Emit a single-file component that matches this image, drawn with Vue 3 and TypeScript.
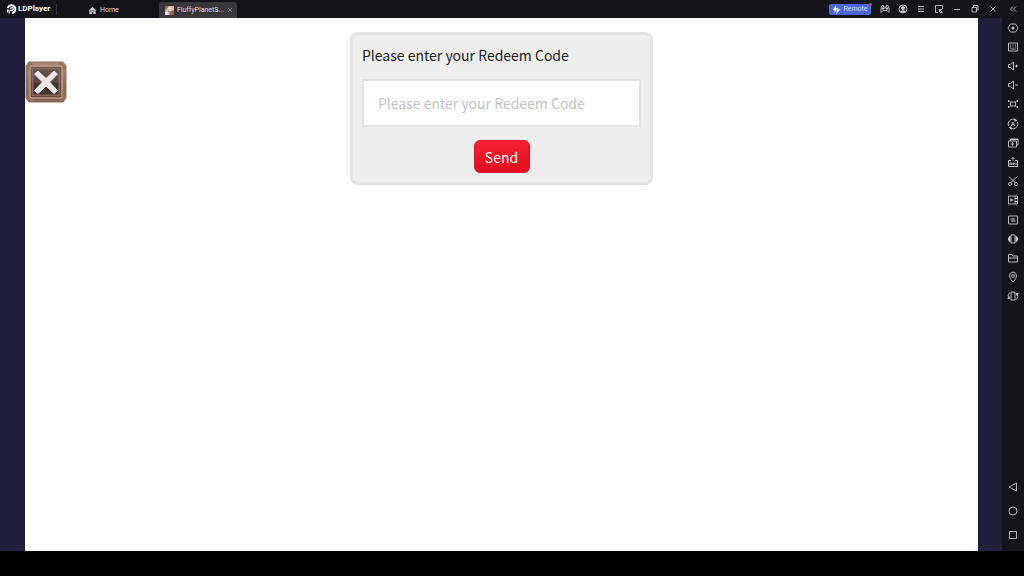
<script setup lang="ts">
import { ref } from 'vue'

interface Icon {
  label: string
  line: string
  solid?: string
}

const code = ref('')

const windowActions: Icon[] = [
  { label: 'Gamepad', line: 'M2 9.500V5L3 2.500h1.500v1.500h3V2.500H9L10 5v4.500L8 7.500H4z M2.500 5h7', solid: 'M3 5h2v1.500H3z M7 5h2v1.500H7z' },
  { label: 'Account', line: 'M6 2a4 4 0 1 0 0 8a4 4 0 1 0 0-8z', solid: 'M6 3a2 2 0 1 0 0 4a2 2 0 1 0 0-4z M3 8.500Q6 6 9 8.500Q6 11 3 8.500z' },
  { label: 'Menu', line: 'M3 3.500h6 M3 6h6 M3 8.500h6' },
  { label: 'Small window', line: 'M5 9.500H2.500v-7h7V6 M6.500 6.500l3 3 M6.500 9V6.500H9 M7 9.500h2.500' },
  { label: 'Minimize', line: 'M3 6.500h6' },
  { label: 'Restore', line: 'M3 4.500h4.500V9H3z M4.500 4V2.500H9V7H8' },
  { label: 'Close', line: 'M3.500 3.500l5 5 M8.500 3.500l-5 5' },
]

const tools: Icon[] = [
  { label: 'Settings', line: 'M3.500 2h5L11 6l-2.500 4h-5L1 6z', solid: 'M6 4.500a1.500 1.500 0 1 0 0 3a1.500 1.500 0 1 0 0-3z' },
  { label: 'Keyboard mapping', line: 'M1.500 2h9v8h-9z M3 4h1 M5.500 4h1 M8 4h1 M3 6h1 M5.500 6h1 M8 6h1 M3.500 8h5' },
  { label: 'Volume up', line: 'M1.500 4.500h2L6.500 2v8L3.500 7.500h-2z M8 6h3 M9.500 4.500v3' },
  { label: 'Volume down', line: 'M1.500 4.500h2L6.500 2v8L3.500 7.500h-2z M8 6h3' },
  { label: 'Full screen', line: 'M3.500 4h5v4h-5z M1.500 2l2 2 M10.500 2l-2 2 M1.500 10l2-2 M10.500 10l-2-2 M1.500 4V2 M10.500 2v2 M1.500 8v2 M10.500 10V8' },
  { label: 'Auto rotate', line: 'M1.500 8A5 5 0 0 1 8 1.500 M10.500 4A5 5 0 0 1 4 10.500 M4.200 8L6 3.800L7.800 8 M5 6.800h2', solid: 'M7.500 0l3 3L7.500 3.500z M4.500 12L1.500 9L4.500 8.500z' },
  { label: 'Multi instance', line: 'M3.500 4V2H11v6H9.500 M1.500 4h8v6h-8z M5.500 5.200v3.600 M3.700 7h3.600 M3.500 2.500H11' },
  { label: 'Install APK', line: 'M4 4.500H1.500v6h9v-6H8 M6 5V1.500 M4.500 3L6 1.500L7.500 3 M3 9V7h1.500v2 M6 9V7h1.500v1H6 M9 6.500V9' },
  { label: 'Screenshot', line: 'M2 1.500l6.500 6.500 M10 1.500L3.500 8 M3 7.500a1.500 1.500 0 1 0 0 3a1.500 1.500 0 1 0 0-3z M9 7.500a1.500 1.500 0 1 0 0 3a1.500 1.500 0 1 0 0-3z' },
  { label: 'Record video', line: 'M1.500 2h9v8h-9z M8 2v8 M8 4.500h2.500 M8 7.500h2.500', solid: 'M3.500 4l3 2l-3 2z' },
  { label: 'Synchronizer', line: 'M1.500 2h9v8h-9z', solid: 'M3.500 4.500h3V3.700L8.500 5.500h-5z M8.500 7.500h-3v.8L3.500 6.500h5z' },
  { label: 'Shake', line: 'M4 2h4v8H4z', solid: 'M3.500 2.500v7L2.500 9L1 7V5l1.500-2z M8.500 2.500v7l1-.5L11 7V5L9.500 3z' },
  { label: 'Shared folder', line: 'M1.500 10V2.500h3.500l1 1.500h4.500v6z M1.500 6h9' },
  { label: 'Location', line: 'M6 1A4 4 0 0 0 2.500 5C2.500 7.500 6 11 6 11S9.500 7.500 9.500 5A4 4 0 0 0 6 1z M6 3.500a1.500 1.500 0 1 0 0 3a1.500 1.500 0 1 0 0-3z' },
  { label: 'Rotate', line: 'M4 2h4v8H4z M2.500 2.500Q0 5.500 2 9 M9.500 9.500Q12 6.500 10 3 M.5 8.500H2.500v-2 M11.500 3.500h-2v2' },
]

const navigation: Icon[] = [
  { label: 'Back', line: 'M9.500 2v8L2 6z' },
  { label: 'Home screen', line: 'M6 2a4 4 0 1 0 0 8a4 4 0 1 0 0-8z' },
  { label: 'Recent apps', line: 'M2.500 2.500h7v7h-7z' },
]
</script>

<template>
  <div class="emulator">
    <header class="titlebar">
      <div class="brand">
        <svg class="logo" viewBox="0 0 12 12" aria-hidden="true">
          <path d="M2 4.500A4.200 4.200 0 1 1 6.500 9.800" fill="none" stroke="#fff" stroke-width="2" />
          <path d="M5 5.500a1.500 1.500 0 1 1 1.500 1.500H4.500L3 10.500" fill="none" stroke="#fff" stroke-width="1.300" />
          <path d="M1 6h2.500L1.500 10z" fill="#fff" />
        </svg>
        <span>LDPlayer</span>
      </div>
      <nav class="tabs">
        <a class="home" href="#home">
          <svg class="icon-small" viewBox="0 0 10 10" aria-hidden="true">
            <path d="M5 1L9.500 5H8.500v4H6V7H4v2H1.500V5H.5z" fill="#ccc" />
            <path d="M2 5.500h6" fill="none" stroke="#55545a" />
          </svg>
          <span>Home</span>
        </a>
        <div class="tab">
          <svg class="icon-small" viewBox="0 0 10 10" aria-hidden="true">
            <path d="M0 0h10v10H0z" fill="#d8b5a4" />
            <path d="M0 0h4L2 4H0z M6 5h4v5H5z" fill="#9a6358" />
            <path d="M3 2l4-1l2 3l-3 2l-3-1z M0 7l4-1v4H0z" fill="#f2e7da" />
            <path d="M4 4h1v1H4z M7 3h1v1H7z M3 6h3v1H3z" fill="#704c4c" />
          </svg>
          <span>FluffyPlanetS...</span>
          <button class="tab-close" type="button" aria-label="Close tab">
            <svg viewBox="0 0 6 6"><path d="M1 1l4 4M5 1L1 5" fill="none" stroke="#888" /></svg>
          </button>
        </div>
      </nav>
      <button class="remote" type="button">
        <svg class="icon-small" viewBox="0 0 10 10" aria-hidden="true">
          <path d="M4.500 0.500L1 5.500h2.500L3 8l3-4H4z M6.500 3L6 5h3L5 9.500L5.500 6.500z" fill="#fff" stroke="#fff" stroke-width=".4" />
        </svg>
        <span>Remote</span>
        <i class="dot"></i>
      </button>
      <div class="window-actions">
        <button v-for="icon in windowActions" :key="icon.label" type="button" :aria-label="icon.label">
          <svg class="icon" viewBox="0 0 12 12">
            <path class="line" :d="icon.line" />
            <path v-if="icon.solid" class="solid" :d="icon.solid" />
          </svg>
        </button>
      </div>
      <button class="collapse" type="button" aria-label="Collapse toolbar">
        <svg class="icon" viewBox="0 0 12 12"><path class="line" d="M6 3.500L3.500 6L6 8.500M9 3.500L6.500 6L9 8.500" /></svg>
      </button>
    </header>

    <div class="body">
      <main class="page">
        <button class="game-close" type="button" aria-label="Close page">
          <svg viewBox="0 0 42 42">
            <defs>
              <linearGradient id="frame" x1="0" y1="0" x2="0" y2="1">
                <stop offset="0" stop-color="#ab8b77" />
                <stop offset="1" stop-color="#806050" />
              </linearGradient>
              <linearGradient id="panel" x1="0" y1="0" x2="0" y2="1">
                <stop offset="0" stop-color="#665650" />
                <stop offset=".5" stop-color="#5a4741" />
                <stop offset=".55" stop-color="#42302b" />
                <stop offset="1" stop-color="#493630" />
              </linearGradient>
            </defs>
            <path d="M4 1h34l3 4v32l-3 4H4l-3-4V5z" fill="url(#frame)" stroke="#8e705e" />
            <path d="M1 6l5-5l4 4l-5 6z M41 6l-5-5l-4 4l5 6z M1 36l5 5l4-4l-5-6z M41 36l-5 5l-4-4l5-6z" fill="#95705c" />
            <path d="M6 5h30l1 1v30l-1 1H6l-1-1V6z" fill="url(#panel)" stroke="#c69c80" stroke-width="1.500" />
            <path d="M7.500 7.500h27v27h-27z" fill="none" stroke="#85695c" stroke-width="2" />
            <path d="M13 10l8 7.500L29 10l3.500 3l-8 8l8 8.500L29 32.500L21 25l-8 7.500l-3.500-3l8-8.500l-8-8z" fill="#ebe8e7" stroke="#ebe8e7" stroke-linejoin="round" />
          </svg>
        </button>
        <form class="redeem" @submit.prevent>
          <label for="redeem-code">Please enter your Redeem Code</label>
          <input id="redeem-code" v-model="code" type="text" placeholder="Please enter your Redeem Code" />
          <button type="submit">Send</button>
        </form>
      </main>
      <aside class="rail">
        <div class="tools">
          <button v-for="icon in tools" :key="icon.label" type="button" :aria-label="icon.label">
            <svg class="icon" viewBox="0 0 12 12">
              <path class="line" :d="icon.line" />
              <path v-if="icon.solid" class="solid" :d="icon.solid" />
            </svg>
          </button>
        </div>
        <div class="navigation">
          <button v-for="icon in navigation" :key="icon.label" type="button" :aria-label="icon.label">
            <svg class="icon" viewBox="0 0 12 12"><path class="line" :d="icon.line" /></svg>
          </button>
        </div>
      </aside>
    </div>
    <footer class="base"></footer>
  </div>
</template>

<style>
body {
  margin: 0;
  background: #000;
}
</style>

<style scoped>
.emulator {
  display: flex;
  flex-direction: column;
  min-height: 100vh;
  background: #15141b;
  color: #ddd;
  font-family: Roboto, "Liberation Sans", sans-serif;
}
button {
  display: flex;
  align-items: center;
  justify-content: center;
  padding: 0;
  border: 0;
  background: none;
  color: inherit;
  font: inherit;
}
svg {
  display: block;
}
.icon {
  width: 12px;
  height: 12px;
}
.icon-small {
  width: 9px;
  height: 9px;
}
.line {
  fill: none;
  stroke: #c8c8ca;
  stroke-width: 0.9;
}
.solid {
  fill: #c8c8ca;
}
.titlebar {
  display: flex;
  align-items: center;
  height: 18px;
  padding-left: 6px;
  font-size: 7px;
}
.brand {
  display: flex;
  align-items: center;
  gap: 1px;
  width: 50px;
  border-right: 1px solid #333239;
  color: #fff;
  font-size: 8px;
  font-weight: 700;
  line-height: 8px;
}
.logo {
  width: 11px;
  height: 11px;
}
.tabs {
  display: flex;
  flex: 1;
  align-self: stretch;
}
.home {
  display: flex;
  align-items: center;
  gap: 3px;
  width: 71px;
  padding: 2px 0 0 31px;
  color: inherit;
  text-decoration: none;
}
.tab {
  display: flex;
  align-items: center;
  gap: 3px;
  box-sizing: border-box;
  width: 78px;
  margin-top: 2px;
  padding: 0 4px 0 6px;
  border-radius: 3px 3px 0 0;
  background: #37363b;
}
.tab-close {
  width: 6px;
  height: 6px;
  margin-left: auto;
}
.remote {
  position: relative;
  gap: 2px;
  width: 42px;
  height: 11px;
  margin-right: 5px;
  border-radius: 2px;
  background: #4967df;
}
.dot {
  position: absolute;
  top: -1px;
  right: -1px;
  width: 3px;
  height: 3px;
  border-radius: 50%;
  background: #c93e4c;
}
.window-actions {
  display: flex;
}
.window-actions button {
  width: 18px;
  height: 18px;
}
.collapse {
  width: 22px;
  height: 18px;
}
.body {
  display: flex;
  flex: 1;
}
.page {
  position: relative;
  flex: 1;
  padding-top: 14px;
  border-right: 24px solid #211f3d;
  border-left: 25px solid #211f3d;
  background: #fff;
}
.game-close {
  position: absolute;
  top: 43px;
  left: 0;
  width: 42px;
  height: 42px;
}
.game-close svg {
  width: 42px;
  height: 42px;
}
.redeem {
  display: flex;
  flex-direction: column;
  box-sizing: border-box;
  width: 303px;
  max-width: 100%;
  margin: 0 auto;
  padding: 9px;
  border: 3px solid #e5e5e5;
  border-radius: 8px;
  background: #eee;
  color: #222;
  font-family: "Noto Sans CJK JP", "Noto Sans", sans-serif;
  font-size: 14px;
  line-height: 22px;
}
.redeem input {
  box-sizing: border-box;
  width: 100%;
  height: 48px;
  margin: 13px 0;
  padding: 0 14px;
  border: 2px solid #e3e3e3;
  border-radius: 0;
  background: #fff;
  color: #222;
  font: inherit;
}
.redeem input::placeholder {
  color: #c3c3c3;
  opacity: 1;
}
.redeem button {
  align-self: center;
  width: 56px;
  height: 33px;
  border: 1px solid #d91527;
  border-radius: 6px;
  background: linear-gradient(#f52032, #e20d1d);
  color: #fff;
}
.rail {
  display: flex;
  flex-direction: column;
  justify-content: space-between;
  width: 22px;
}
.tools {
  display: flex;
  flex-direction: column;
  height: 288px;
}
.tools button {
  flex: 1;
}
.navigation {
  padding-bottom: 4px;
}
.navigation button {
  width: 22px;
  height: 24px;
}
.base {
  height: 25px;
  background: #000;
}
</style>
